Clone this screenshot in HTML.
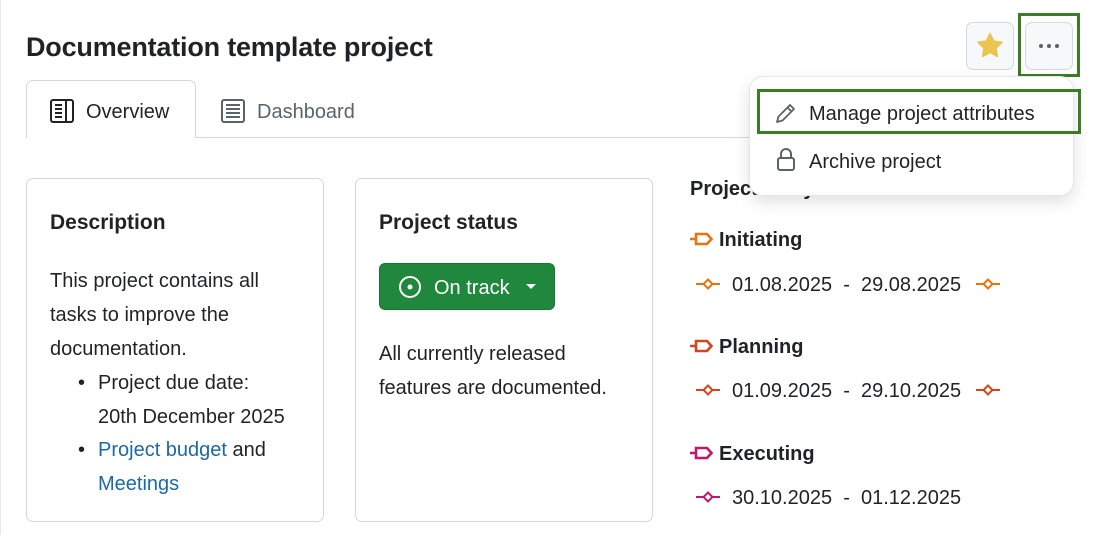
<!DOCTYPE html>
<html><head><meta charset="utf-8"><style>
*{box-sizing:border-box;margin:0;padding:0}
body{width:1093px;height:535px;overflow:hidden;background:#fff;font-family:"Liberation Sans",sans-serif;color:#1f2328;position:relative}
.a{position:absolute}
h1{position:absolute;left:26px;top:32px;font-size:27px;font-weight:bold;letter-spacing:-0.2px}
.card{position:absolute;top:178px;height:344px;border:1px solid #d1d9e0;border-radius:7px}
.h{font-size:21px;font-weight:bold}
.t{font-size:20px;line-height:34px}
a{text-decoration:none;color:#1a6aa8}
.btn{position:absolute;top:22px;width:48px;height:48px;border:1px solid #d1d9e0;border-radius:7px;background:#f6f8fa}
.ph{position:absolute;left:690px;font-size:20px;font-weight:bold}
.dt{position:absolute;left:690px;font-size:20px;white-space:pre}
</style></head><body>
<div class="a" style="left:0;top:0;width:1px;height:535px;background:#e5e7ea"></div>
<h1>Documentation template project</h1>
<div class="btn" style="left:966px"><svg width="48" height="48" viewBox="0 0 48 48" style="position:absolute;left:-1px;top:-1px"><path d="M24 11.5l3.7 7.6 8.3 1.2-6 5.8 1.4 8.3L24 30.5l-7.4 3.9 1.4-8.3-6-5.8 8.3-1.2z" fill="#eac54f" stroke="#eac54f" stroke-width="1.5" stroke-linejoin="round"/></svg></div>
<div class="btn" style="left:1025px"><svg width="48" height="48" style="position:absolute;left:-1px;top:-1px"><circle cx="16" cy="24" r="2" fill="#59636e"/><circle cx="24" cy="24" r="2" fill="#59636e"/><circle cx="32" cy="24" r="2" fill="#59636e"/></svg></div>
<div class="a" style="left:1018px;top:13px;width:62px;height:64px;border:3px solid #3a7d22"></div>

<div class="a" style="left:26px;top:137px;width:730px;height:1px;background:#d1d9e0"></div>
<div class="a" style="left:26px;top:80px;width:170px;height:58px;border:1px solid #d1d9e0;border-bottom:none;border-radius:7px 7px 0 0;background:#fff"></div>
<svg class="a" style="left:50px;top:99px" width="24" height="24" viewBox="0 0 24 24" fill="none" stroke="#1f2328" stroke-width="2"><rect x="1" y="1" width="22" height="22" rx="2"/><line x1="16" y1="1" x2="16" y2="23"/><path d="M5 6h7M5 10h7M5 14h7M5 18h7"/></svg>
<div class="a" style="left:86px;top:101px;font-size:20px">Overview</div>
<svg class="a" style="left:221px;top:99px" width="24" height="24" viewBox="0 0 24 24" fill="none" stroke="#59636e" stroke-width="2"><rect x="1" y="1" width="22" height="22" rx="2"/><path d="M5 6h14M5 10h14M5 14h14M5 18h14"/></svg>
<div class="a" style="left:257px;top:101px;font-size:20px;color:#59636e">Dashboard</div>

<div class="card" style="left:26px;width:298px"></div>
<div class="a h" style="left:50px;top:211px">Description</div>
<div class="a t" style="left:50px;top:264px;width:260px">This project contains all<br>tasks to improve the<br>documentation.</div>
<div class="a t" style="left:78px;top:366px">•</div>
<div class="a t" style="left:98px;top:366px">Project due date:<br>20th December 2025</div>
<div class="a t" style="left:78px;top:433px">•</div>
<div class="a t" style="left:98px;top:433px"><a>Project budget</a> and<br><a>Meetings</a></div>

<div class="card" style="left:355px;width:298px"></div>
<div class="a h" style="left:379px;top:211px">Project status</div>
<div class="a" style="left:379px;top:263px;width:176px;height:47px;background:#1f883d;border:1px solid #1a7233;border-radius:6px;color:#fff;font-size:20px">
<svg class="a" style="left:18px;top:11px" width="24" height="24"><circle cx="12" cy="12" r="10" fill="none" stroke="#fff" stroke-width="2"/><circle cx="12" cy="12" r="2.5" fill="#fff"/></svg>
<span class="a" style="left:54px;top:13px">On track</span>
<svg class="a" style="left:145px;top:19px" width="12" height="8"><path d="M1 1h10l-5 5z" fill="#fff"/></svg></div>
<div class="a t" style="left:379px;top:337px">All currently released<br>features are documented.</div>

<div class="a h" style="left:690px;top:178px;font-size:20px">Project lifecycle</div>
<svg class="a" style="left:689px;top:229px" width="26" height="20"><path d="M1 10h6M7 5h11l4.5 5-4.5 5H7z" fill="none" stroke="#e8740c" stroke-width="2.6"/></svg>
<div class="ph" style="left:719px;top:229px">Initiating</div>
<div class="dt" style="left:732px;top:274px">01.08.2025  -  29.08.2025</div>
<svg class="a" style="left:696px;top:277px" width="24" height="14"><path d="M0 7h7M17 7h7" stroke="#e8740c" stroke-width="2"/><path d="M12 2.5l4.5 4.5-4.5 4.5-4.5-4.5z" fill="none" stroke="#e8740c" stroke-width="2"/></svg>
<svg class="a" style="left:976px;top:277px" width="24" height="14"><path d="M0 7h7M17 7h7" stroke="#e8740c" stroke-width="2"/><path d="M12 2.5l4.5 4.5-4.5 4.5-4.5-4.5z" fill="none" stroke="#e8740c" stroke-width="2"/></svg>

<svg class="a" style="left:689px;top:336px" width="26" height="20"><path d="M1 10h6M7 5h11l4.5 5-4.5 5H7z" fill="none" stroke="#d2461c" stroke-width="2.6"/></svg>
<div class="ph" style="left:719px;top:336px">Planning</div>
<div class="dt" style="left:732px;top:380px">01.09.2025  -  29.10.2025</div>
<svg class="a" style="left:696px;top:383px" width="24" height="14"><path d="M0 7h7M17 7h7" stroke="#d2461c" stroke-width="2"/><path d="M12 2.5l4.5 4.5-4.5 4.5-4.5-4.5z" fill="none" stroke="#d2461c" stroke-width="2"/></svg>
<svg class="a" style="left:976px;top:383px" width="24" height="14"><path d="M0 7h7M17 7h7" stroke="#d2461c" stroke-width="2"/><path d="M12 2.5l4.5 4.5-4.5 4.5-4.5-4.5z" fill="none" stroke="#d2461c" stroke-width="2"/></svg>

<svg class="a" style="left:689px;top:443px" width="26" height="20"><path d="M1 10h6M7 5h11l4.5 5-4.5 5H7z" fill="none" stroke="#c2176f" stroke-width="2.6"/></svg>
<div class="ph" style="left:719px;top:443px">Executing</div>
<div class="dt" style="left:732px;top:487px">30.10.2025  -  01.12.2025</div>
<svg class="a" style="left:696px;top:490px" width="24" height="14"><path d="M0 7h7M17 7h7" stroke="#c2176f" stroke-width="2"/><path d="M12 2.5l4.5 4.5-4.5 4.5-4.5-4.5z" fill="none" stroke="#c2176f" stroke-width="2"/></svg>

<div class="a" style="left:749px;top:76px;width:325px;height:120px;background:#fff;border:1px solid #e3e7eb;border-radius:14px;box-shadow:0 6px 16px rgba(0,0,0,.12)"></div>
<svg class="a" style="left:774px;top:101px" width="24" height="24" fill="none" stroke="#59636e" stroke-width="1.8" stroke-linejoin="round"><path d="M3 21l1.5-5.5L16 4l4 4L8.5 19.5z M13.5 6.5l4 4"/></svg>
<div class="a" style="left:809px;top:103px;font-size:20px">Manage project attributes</div>
<div class="a" style="left:757px;top:89px;width:324px;height:45px;border:3px solid #3a7d22"></div>
<svg class="a" style="left:776px;top:148px" width="20" height="24" fill="none" stroke="#59636e" stroke-width="2"><rect x="2" y="10" width="16" height="12" rx="2"/><path d="M5 10V6a5 5 0 0 1 10 0v4"/></svg>
<div class="a" style="left:809px;top:151px;font-size:20px">Archive project</div>
</body></html>
